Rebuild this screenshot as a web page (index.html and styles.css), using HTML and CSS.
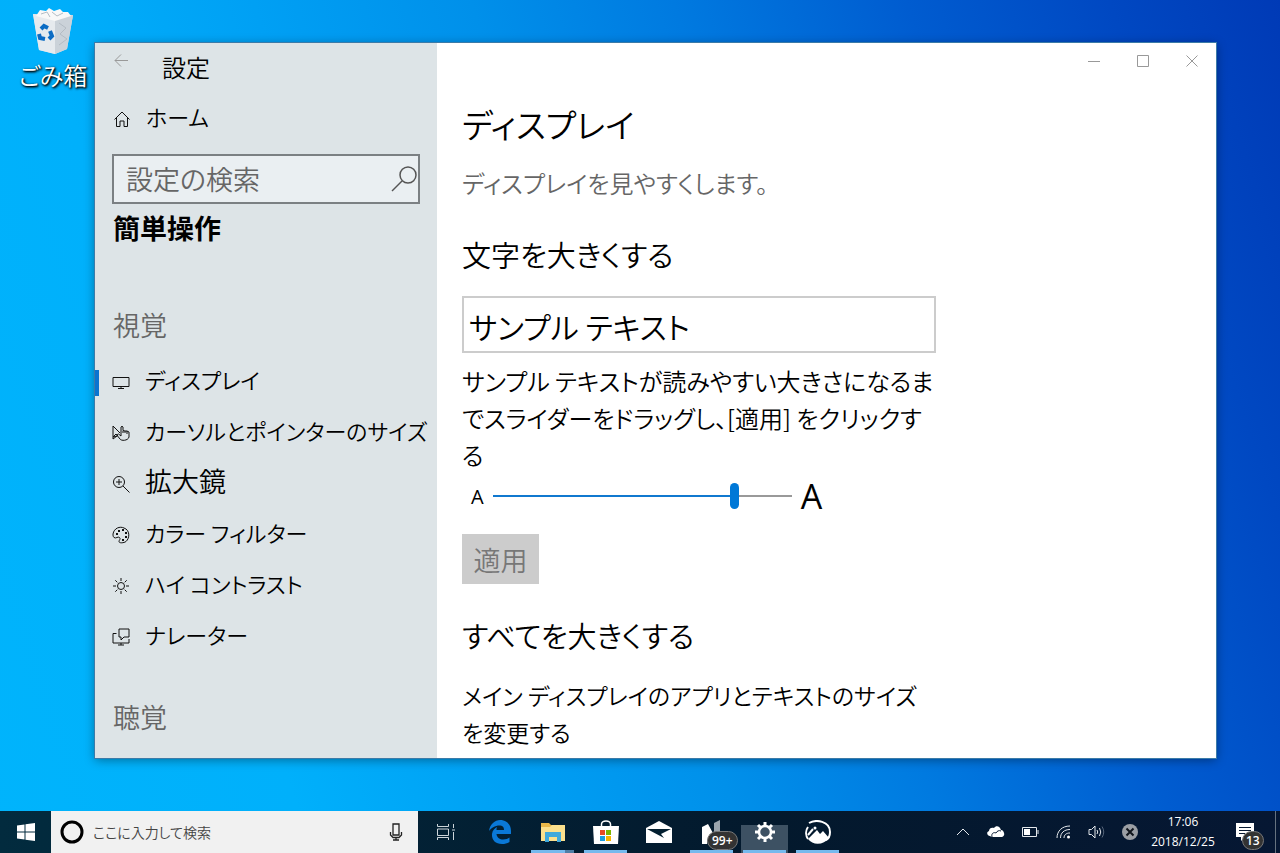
FILE: index.html
```html
<!DOCTYPE html>
<html lang="ja">
<head>
  <meta charset="utf-8">
  <title>設定</title>
  <link rel="stylesheet" href="styles.css">
</head>
<body>
  <div class="desktop">
    <a class="shortcut" href="#">
      <svg width="42" height="46" viewBox="0 0 42 46">
        <path d="M1 6 L7 42 L23 46 L35 41 L41 7 Z" fill="#dfe6ec"/>
        <path d="M1 6 L23 10 L23 46 L7 42 Z" fill="#e6eaee"/>
        <path d="M23 10 L41 7 L35 41 L23 46 Z" fill="#cbd2d9"/>
        <path d="M4 8 L8 2 L14 3 L17 0 L22 3 L28 1 L31 4 L36 4 L39 8 L23 13 Z" fill="#f8f8f8"/>
        <path d="M9 6 L15 4 L18 9 M20 4 L25 8 L31 5 M27 15 L34 20 L28 26 L35 31 L27 37" fill="none" stroke="#b4bcc4" stroke-width="1"/>
        <path d="M9 21 L12 18 L16 20 M18 23 L20 28 L17 31 M13 31 L8 30 L7 26" fill="none" stroke="#0c6cc4" stroke-width="4"/>
      </svg>
      <span>ごみ箱</span>
    </a>

    <div class="window">
      <aside class="sidebar">
        <div class="titlebar">
          <button class="back" aria-label="戻る">
            <svg width="14" height="13" viewBox="0 0 14 13"><path d="M7 .5 L1 6.500 L7 12.500 M1 6.500 H14"/></svg>
          </button>
          <span class="app-name">設定</span>
        </div>
        <a class="nav-item home" href="#">
          <svg width="18" height="18" viewBox="0 0 18 18"><path d="M1.500 9.500 L9 2 L16.500 9.500 M3.500 8 V16.500 H7 V11 H11 V16.500 H14.500 V8"/></svg>
          <span>ホーム</span>
        </a>
        <div class="search">
          <input type="text" placeholder="設定の検索" aria-label="設定の検索">
          <svg width="28" height="28" viewBox="0 0 28 28"><circle cx="18" cy="10" r="8"/><path d="M12 16 L2 26"/></svg>
        </div>
        <h2 class="category">簡単操作</h2>
        <h3 class="group">視覚</h3>
        <nav>
          <a class="nav-item active" href="#">
            <svg width="18" height="18" viewBox="0 0 18 18"><path d="M1 4.500 H17 V13.500 H1 Z M9 13.500 V15.500 M6 15.500 H12"/></svg>
            <span>ディスプレイ</span>
          </a>
          <a class="nav-item" href="#">
            <svg width="18" height="18" viewBox="0 0 18 18"><path d="M5 12 L1 15 V2 L8 9 M1 13 L4 10 L8 15 C9 17 16 17 17 13 V8 L15 7 L13 7 L11 6.500 V3 Q10 1.500 9 3 V12 L6.500 10 Q4.500 10 5.500 12 Z M11 7 V9 M13 7 V9 M15 7 V10"/></svg>
            <span>カーソルとポインターのサイズ</span>
          </a>
          <a class="nav-item kanji" href="#">
            <svg width="18" height="18" viewBox="0 0 18 18"><circle cx="7" cy="7" r="5.500"/><path d="M11 11 L17.500 17.500 M4 7 H10 M7 4 V10"/></svg>
            <span>拡大鏡</span>
          </a>
          <a class="nav-item" href="#">
            <svg width="18" height="18" viewBox="0 0 18 18"><path d="M1 8 C2 2 8 0 12 2 C18 4 18 12 14 15.500 C12 17 7 17.500 7 15.500 C7 14 9 13 7.500 11.500 C6 10 4 13 2 11.500 C1 10.500 1 9.500 1 8 Z"/><path class="dots" d="M4 7h2v2h-2z M6 4h2v2h-2z M10 3h2v2h-2z M13 6h2v2h-2z M13 10h2v2h-2z M10 13h2v2h-2z"/></svg>
            <span>カラー フィルター</span>
          </a>
          <a class="nav-item" href="#">
            <svg width="18" height="18" viewBox="0 0 18 18"><circle cx="9" cy="9" r="3.500"/><path d="M9 1 V4 M9 14 V17 M1 9 H4 M14 9 H17 M3.300 3.300 L5.300 5.300 M12.700 12.700 L14.700 14.700 M3.300 14.700 L5.300 12.700 M12.700 5.300 L14.700 3.300"/></svg>
            <span>ハイ コントラスト</span>
          </a>
          <a class="nav-item" href="#">
            <svg width="18" height="18" viewBox="0 0 18 18"><path d="M7 1 H17 V9 H12 L9 12 V9 H7 Z M4.500 5.500 H1 V15 H17 V11 M9 15 V17 M6 17 H12"/></svg>
            <span>ナレーター</span>
          </a>
        </nav>
        <h3 class="group">聴覚</h3>
      </aside>

      <main class="content">
        <div class="window-buttons">
          <button aria-label="最小化"><svg width="12" height="12" viewBox="0 0 12 12"><path d="M0 6.500 H12"/></svg></button>
          <button aria-label="最大化"><svg width="12" height="12" viewBox="0 0 12 12"><path d="M.5 .5 H11.500 V11.500 H.5 Z"/></svg></button>
          <button aria-label="閉じる"><svg width="12" height="12" viewBox="0 0 12 12"><path d="M.5 .5 L11.500 11.500 M11.500 .5 L.5 11.500"/></svg></button>
        </div>
        <div class="page">
          <h1>ディスプレイ</h1>
          <p class="lead">ディスプレイを見やすくします。</p>
          <h2>文字を大きくする</h2>
          <div class="sample">サンプル テキスト</div>
          <label class="hint" for="text-size">サンプル テキストが読みやすい大きさになるま<br>でスライダーをドラッグし、[適用] をクリックす<br>る</label>
          <div class="slider">
            <span class="small-a">A</span>
            <input type="range" id="text-size" min="0" max="100" value="82">
            <span class="big-a">A</span>
          </div>
          <button class="apply" disabled>適用</button>
          <h2>すべてを大きくする</h2>
          <p class="text">メイン ディスプレイのアプリとテキストのサイズ<br>を変更する</p>
        </div>
      </main>
    </div>
  </div>

  <footer class="taskbar">
    <button class="start" aria-label="スタート">
      <svg width="18" height="18" viewBox="0 0 18 18"><path fill="#fff" d="M0 2.500 L7.500 1.500 V8.500 H0 Z M8.500 1.300 L18 0 V8.500 H8.500 Z M0 9.500 H7.500 V16.500 L0 15.500 Z M8.500 9.500 H18 V18 L8.500 16.700 Z"/></svg>
    </button>
    <div class="cortana">
      <svg width="24" height="24" viewBox="0 0 24 24"><circle cx="12" cy="12" r="10" fill="none" stroke="#000" stroke-width="3"/></svg>
      <input type="text" placeholder="ここに入力して検索" aria-label="ここに入力して検索">
      <svg width="14" height="18" viewBox="0 0 14 18"><path fill="none" stroke="#222" stroke-width="1.300" d="M4 1 H10 V12 H4 Z M1.500 9 V12 L4 14.500 H10 L12.500 12 V9 M7 14.500 V17 M4 17 H10"/></svg>
    </div>
    <div class="apps">
      <button class="app" aria-label="タスク ビュー">
        <svg width="18" height="18" viewBox="0 0 18 18"><path fill="none" stroke="#cdd5da" d="M.5 1 V3.500 H11.500 V1 M.5 6 H11.500 V12.500 H.5 Z M.5 17 V14.500 H11.500 V17 M16.500 1 V5 M16.500 9 V17 M15 7 H18"/></svg>
      </button>
      <button class="app" aria-label="Edge">
        <svg width="22" height="24" viewBox="0 0 22 24"><path fill="#0a78d7" d="M0 11 C1 4 6 0 11 0 C18 0 22 5 22 11 V14 H7.500 C8 18 11 19.500 14 19.500 C17 19.500 19 18.500 20.500 17.500 V22 C18 23.500 16 24 13 24 C6 24 2.500 19.500 3 14 C3.500 10 6 8 8 7 C7.500 8 7.500 9 7.500 10 H15 C15 6.500 13 5.500 10.500 5.500 C6 5.500 2 8 0 11 Z"/></svg>
      </button>
      <button class="app running grouped" aria-label="エクスプローラー">
        <svg width="24" height="20" viewBox="0 0 24 20"><path fill="#e9b84a" d="M0 1 H8 L10 3 H24 V19 H0 Z"/><path fill="#fbe08d" d="M0 5 H9 L11 3 H24 V19 H0 Z"/><path fill="#3fa9dc" d="M4 10 H20 V20 H16 V15 H8 V20 H4 Z"/></svg>
      </button>
      <button class="app running" aria-label="ストア">
        <svg width="26" height="24" viewBox="0 0 26 24"><path fill="none" stroke="#fff" stroke-width="1.500" d="M8.500 7 V4 Q9 1 13 1 Q17 1 17.500 4 V7"/><path fill="#fff" d="M0 6 H26 L25 24 H1 Z"/><path fill="#e84a25" d="M7 10h5v5h-5z"/><path fill="#7db500" d="M13 10h5v5h-5z"/><path fill="#1b9fe0" d="M7 16h5v5h-5z"/><path fill="#f9b400" d="M13 16h5v5h-5z"/></svg>
      </button>
      <button class="app" aria-label="メール">
        <svg width="26" height="22" viewBox="0 0 26 22"><path fill="#fff" d="M0 7 L13 0 L26 7 V22 H0 Z"/><path fill="#031f30" d="M1 8 H25 L15 13 L18 17 Z"/></svg>
      </button>
      <button class="app running" aria-label="ニュース">
        <svg width="20" height="24" viewBox="0 0 20 24"><path fill="#fff" d="M0 7 L6 4 L12 15 V24 H6 L5 18 V24 H0 Z"/><path fill="#9aa4ad" d="M12 3 L18 0 V20 H12 Z"/></svg>
        <span class="badge">99+</span>
      </button>
      <button class="app running current" aria-label="設定">
        <svg width="20" height="20" viewBox="0 0 20 20"><circle cx="10" cy="10" r="6" fill="none" stroke="#fff" stroke-width="2.500"/><path stroke="#fff" stroke-width="3" d="M10 0 V4 M10 16 V20 M0 10 H4 M16 10 H20 M3 3 L5.500 5.500 M14.500 14.500 L17 17 M3 17 L5.500 14.500 M14.500 5.500 L17 3"/></svg>
      </button>
      <button class="app running" aria-label="フォト">
        <svg width="26" height="24" viewBox="0 0 26 24"><path fill="none" stroke="#fff" stroke-width="2" d="M4 3 C11 -1 25 1 25 12 C25 16 23 19 21 20 M3 7 C0 11 1 16 3 19"/><path fill="#fff" d="M3 19 L12 10 L15 14 L18 11 L24 18 C19 25 8 26 3 19 Z"/><path stroke="#fff" stroke-width="2" d="M3 15 L8 9"/><circle cx="10" cy="8" r="1.500" fill="#fff"/></svg>
      </button>
    </div>
    <div class="tray">
      <svg width="14" height="8" viewBox="0 0 14 8"><path d="M1 7 L7 1 L13 7"/></svg>
      <svg width="18" height="12" viewBox="0 0 18 12"><path class="solid" d="M3 10 C0 10 -1 6 2 5 C2 2 5 1 7 2 C9 -1 13 0 14 4 C17 4 19 10 15 11 H6 C5 11 4 11 3 10 Z"/><path stroke="#071a33" d="M5 11 C4 7 7 6 9 7 C10 5 12 4 14 5"/></svg>
      <svg width="17" height="10" viewBox="0 0 17 10"><path d="M.5 .5 H14.500 V9.500 H.5 Z M16 3 V7"/><path class="solid" d="M2 2 H8 V8 H2 Z"/></svg>
      <svg width="15" height="14" viewBox="0 0 15 14"><path d="M1 13 C1 6 6 1 14 1 M4.500 13 C4.500 8 8 4.500 14 4.500 M8 13 C8 10 10 8 14 8"/><circle class="solid" cx="12.500" cy="12" r="1.500"/></svg>
      <svg width="17" height="14" viewBox="0 0 17 14"><path d="M1 4.500 H3.500 L7 1 V13 L3.500 9.500 H1 Z M9 5 Q10.500 7 9 9 M11.500 3 Q14 7 11.500 11"/><path stroke="#56657a" d="M14 1.500 Q17.500 7 14 12.500"/></svg>
      <svg width="16" height="16" viewBox="0 0 16 16"><circle cx="8" cy="8" r="8" fill="#9b9fa5" stroke="none"/><path stroke="#10151c" stroke-width="2" d="M4.500 4.500 L11.500 11.500 M11.500 4.500 L4.500 11.500"/></svg>
    </div>
    <div class="clock"><time>17:06</time><time>2018/12/25</time></div>
    <button class="notices" aria-label="通知">
      <svg width="18" height="18" viewBox="0 0 18 18"><path fill="#fff" d="M0 0 H18 V14 H9 L5 18 V14 H0 Z"/><path stroke="#071a33" d="M3 4.500 H15 M3 7.500 H15 M3 10.500 H9"/></svg>
      <span class="badge">13</span>
    </button>
    <div class="show-desktop"></div>
  </footer>
</body>
</html>
```
FILE: styles.css
```css
* {
    box-sizing: border-box;
}
body {
    margin: 0;
    height: 100vh;
    display: flex;
    flex-direction: column;
    overflow: hidden;
    font-family: "Noto Sans CJK JP", sans-serif;
    font-feature-settings: "palt";
    font-weight: 350;
    color: #000;
    background: linear-gradient(72deg, #00b4fc 0%, #00b0fb 20%, #00a0f4 34%, #0090ea 48%, #007ae0 61%, #005cd0 76%, #0048c2 89%, #003ab6 100%);
}
h1, h2, h3, p {
    margin: 0;
    font-weight: 350;
}
button, input {
    font: inherit;
    font-feature-settings: inherit;
    color: inherit;
}
button {
    border: 0;
    padding: 0;
    background: none;
}
a {
    color: inherit;
    text-decoration: none;
}
svg {
    display: block;
    flex: none;
}

/* desktop */
.desktop {
    position: relative;
    flex: 1;
    min-height: 0;
    padding: 43px 64px 53px 95px;
}
.shortcut {
    position: absolute;
    left: 12px;
    top: 8px;
    width: 82px;
    display: flex;
    flex-direction: column;
    align-items: center;
    gap: 3px;
    color: #fff;
    font-size: 24px;
    line-height: 36px;
    text-shadow: 1px 1px 2px #000, 1px 1px 3px #000;
}
.window {
    height: 100%;
    display: flex;
    overflow: hidden;
    background: #fff;
    box-shadow: 0 0 0 1px #3c7ba8, 0 2px 10px rgba(0, 0, 0, 0.4);
}

/* sidebar */
.sidebar {
    width: 342px;
    flex: none;
    background: #dde4e7;
}
.sidebar svg, .window-buttons svg {
    fill: none;
    stroke: #111;
}
.titlebar {
    display: flex;
    height: 48px;
    padding-left: 19px;
    gap: 34px;
}
.titlebar .back {
    height: 34px;
}
.titlebar .back svg {
    stroke: #999;
}
.app-name {
    font-size: 24px;
    line-height: 48px;
}
.nav-item {
    display: flex;
    align-items: center;
    height: 51px;
    padding-left: 17px;
    gap: 15px;
    font-size: 22px;
    line-height: 48px;
    white-space: nowrap;
}
.nav-item svg {
    margin-top: 6px;
}
.home {
    height: 50px;
    padding-left: 18px;
}
.kanji {
    font-size: 27px;
}
.active {
    background: linear-gradient(#0a74d0, #0a74d0) 0 17px / 4px 26px no-repeat;
}
.search {
    display: flex;
    align-items: center;
    height: 50px;
    margin: 13px 17px 0 17px;
    border: 2px solid #7b8083;
    background: #eaeff2;
}
.search input {
    flex: 1;
    min-width: 0;
    padding: 0 12px;
    border: 0;
    background: none;
    font-size: 27px;
    line-height: 40px;
}
.search svg {
    stroke: #555;
    stroke-width: 1.5;
}
input::placeholder {
    color: #666;
    opacity: 1;
}
.category {
    padding-left: 18px;
    font-size: 27px;
    line-height: 48px;
    font-weight: 700;
}
.group {
    padding-left: 18px;
    font-size: 27px;
    line-height: 48px;
    color: #666;
}
.category + .group {
    margin-top: 49px;
}
nav {
    display: grid;
    padding: 4px 0 34px;
}
.dots {
    fill: #111;
    stroke: none;
}

/* content */
.content {
    flex: 1;
    min-width: 0;
}
.window-buttons {
    display: flex;
    justify-content: flex-end;
    height: 36px;
}
.window-buttons button {
    width: 49px;
    display: flex;
    align-items: center;
    justify-content: center;
}
.window-buttons svg {
    stroke: #999;
}
.page {
    padding: 17px 25px;
}
.page h1 {
    font-size: 33px;
    line-height: 56px;
}
.lead {
    margin-top: 12px;
    font-size: 24px;
    line-height: 37px;
    color: #666;
}
.page h2 {
    margin-top: 29px;
    font-size: 29px;
    line-height: 48px;
}
.sample {
    width: 474px;
    height: 57px;
    margin: 18px 0 9px;
    padding: 0 5px;
    border: 2px solid #ccc;
    font-size: 30px;
    line-height: 56px;
}
.hint, .text {
    display: block;
    font-size: 24px;
    line-height: 37px;
    white-space: nowrap;
}
.slider {
    display: flex;
    align-items: center;
    height: 46px;
    padding-left: 9px;
    gap: 9px;
    font-family: "Open Sans", "Noto Sans CJK JP", sans-serif;
    font-weight: 400;
}
.small-a {
    font-size: 20px;
}
.big-a {
    font-size: 34px;
}
.slider input {
    appearance: none;
    width: 299px;
    height: 26px;
    margin: 0;
    background: linear-gradient(90deg, #1078cf 81%, #999 81%) center / 100% 2px no-repeat;
}
.slider input::-webkit-slider-thumb {
    appearance: none;
    width: 9px;
    height: 26px;
    border-radius: 5px;
    background: #0078d7;
}
.apply {
    display: block;
    width: 77px;
    height: 50px;
    margin-top: 15px;
    background: #ccc;
    color: #777;
    font-size: 27px;
}
.page .apply + h2 {
    margin-top: 27px;
}
.text {
    margin-top: 18px;
    font-size: 23px;
}

/* taskbar */
.taskbar {
    display: flex;
    height: 42px;
    flex: none;
    color: #fff;
    background: linear-gradient(90deg, #022b3e, #03192d 60%, #061733);
}
.start {
    width: 51px;
    display: flex;
    align-items: center;
    justify-content: center;
}
.cortana {
    width: 367px;
    display: flex;
    align-items: center;
    padding: 0 15px 0 9px;
    gap: 9px;
    background: #f1f1f1;
}
.cortana input {
    flex: 1;
    min-width: 0;
    padding: 0;
    border: 0;
    background: none;
    font-size: 14px;
}
.cortana input::placeholder {
    color: #444;
}
.apps {
    display: flex;
}
.app {
    position: relative;
    width: 53px;
    padding: 0 5px;
    display: flex;
    align-items: center;
    justify-content: center;
}
.app:first-child {
    width: 55px;
}
.running::after {
    content: "";
    position: absolute;
    left: 5px;
    right: 5px;
    bottom: 0;
    height: 3px;
    background: #76b9ed;
}
.grouped::after {
    background: linear-gradient(90deg, #76b9ed 80%, #4f7ea6 80%);
}
.current {
    background: linear-gradient(#3d5163, #3d5163) center bottom / 47px 28px no-repeat;
}
.badge {
    position: absolute;
    left: 22px;
    top: 20px;
    padding: 0 4px;
    border: 1px solid #777;
    border-radius: 10px;
    background: #333;
    font-family: "Open Sans", sans-serif;
    font-size: 12px;
    font-weight: 600;
    line-height: 17px;
}
.tray {
    display: flex;
    align-items: center;
    gap: 17px;
    margin-left: auto;
}
.tray svg {
    fill: none;
    stroke: #e4e8ec;
}
.tray .solid {
    fill: #fff;
    stroke: none;
}
.clock {
    width: 90px;
    display: flex;
    flex-direction: column;
    align-items: center;
    justify-content: center;
    font-family: "Open Sans", sans-serif;
    font-size: 12px;
    font-weight: 400;
    line-height: 20px;
}
.notices {
    position: relative;
    width: 47px;
    padding-left: 8px;
}
.notices .badge {
    left: 14px;
    padding: 0 3px;
}
.show-desktop {
    width: 5px;
    border-left: 1px solid #66727f;
}
```
